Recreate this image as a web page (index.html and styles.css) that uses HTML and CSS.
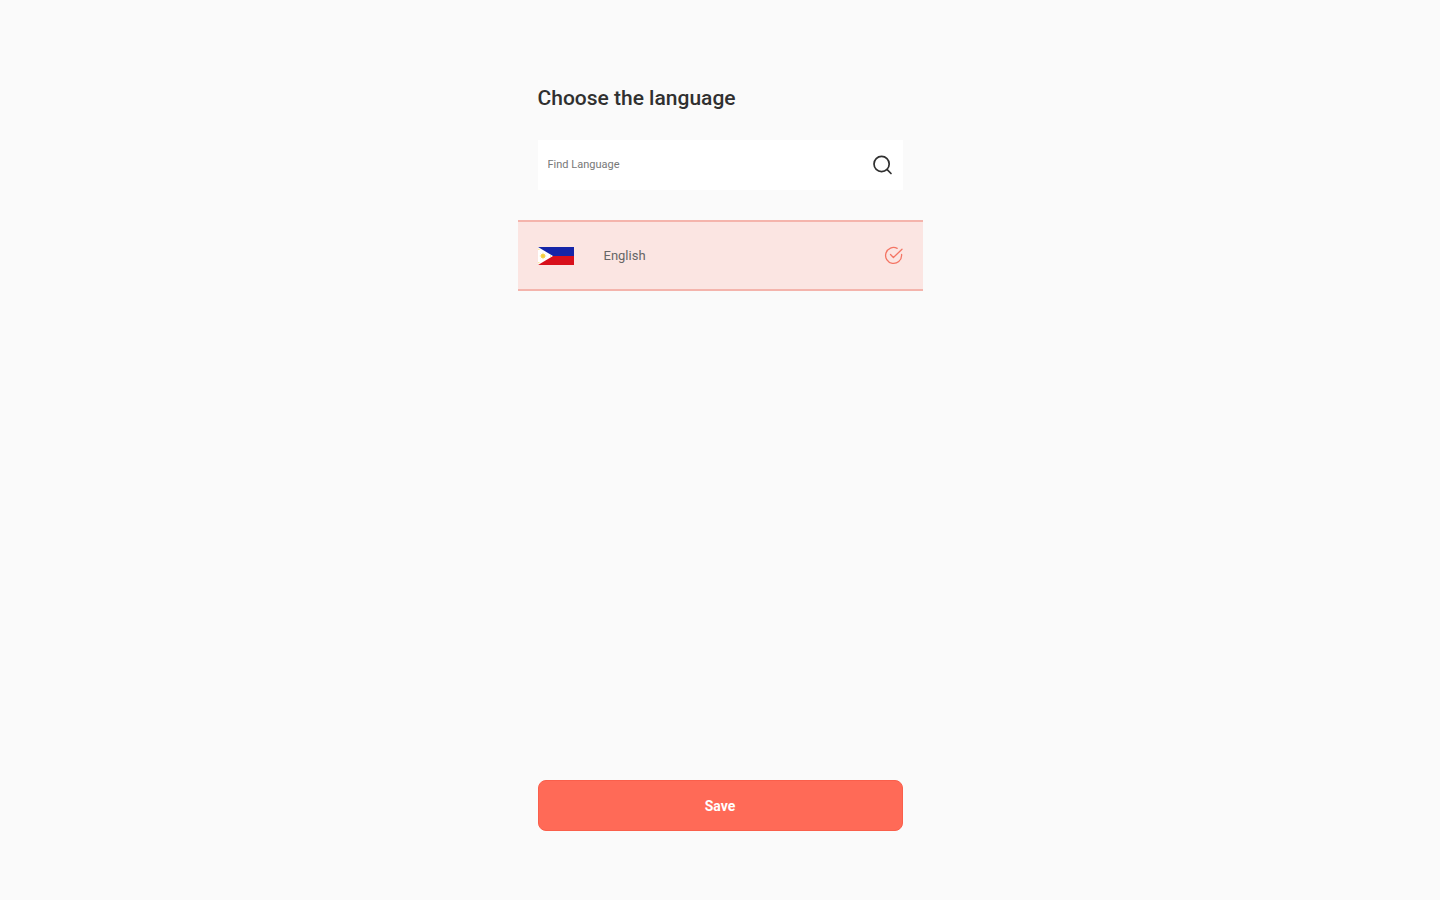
FILE: index.html
```html
<!DOCTYPE html>
<html lang="en">
<head>
  <meta charset="utf-8">
  <meta name="viewport" content="width=device-width, initial-scale=1">
  <title>Choose the language</title>
  <link rel="stylesheet" href="styles.css">
</head>
<body>
  <main class="page">
    <form class="picker">
      <h1 class="title">Choose the language</h1>
      <div class="search">
        <input class="search-input" type="search" placeholder="Find Language" aria-label="Find Language">
        <button class="search-button" type="button" aria-label="Search">
          <svg width="20" height="20" viewBox="0 0 20 20" fill="none" stroke="#303030" stroke-width="1.7" stroke-linecap="round">
            <circle cx="8.6" cy="9" r="7.6"/>
            <path d="M14.2 14.6L18 18.5"/>
          </svg>
        </button>
      </div>
      <label class="option">
        <input class="option-radio" type="radio" name="language" value="en" checked>
        <svg class="flag" width="36" height="18" viewBox="0 0 36 18" aria-hidden="true">
          <path fill="#1525a8" d="M0 0H36V9H0z"/>
          <path fill="#d8101c" d="M0 9H36V18H0z"/>
          <path fill="#fff" d="M0 0L15 9L0 18z"/>
          <circle cx="5" cy="9" r="2" fill="#f5cf3c"/>
          <path stroke="#f5cf3c" stroke-width=".7" d="M5 5.8V12.2M1.8 9H8.2M2.8 6.8L7.2 11.2M7.2 6.8L2.8 11.2"/>
          <path fill="#f5cf3c" d="M.4 1.7h1v1h-1zM.4 15.3h1v1h-1zM12 8.5h1v1h-1z"/>
        </svg>
        <span class="option-name">English</span>
        <svg class="tick" width="20" height="20" viewBox="0 0 20 20" fill="none" stroke="#f47564" stroke-width="1.3" stroke-linecap="round" stroke-linejoin="round" aria-hidden="true">
          <path d="M18.6 8.4V9.5A8 8 0 1 1 14.2 2.3"/>
          <path d="M7.5 8.5L10.4 11.5L19 3.3"/>
        </svg>
      </label>
      <button class="save" type="submit">Save</button>
    </form>
  </main>
</body>
</html>
```
FILE: styles.css
```css
* {
  box-sizing: border-box;
}

body {
  margin: 0;
  background: #fafafa;
  color: #303030;
  font-family: Roboto, Inter, sans-serif;
}

.page {
  display: flex;
  justify-content: center;
  min-height: 100vh;
  padding: 84px 0 69px;
}

.picker {
  display: flex;
  flex-direction: column;
  width: 100%;
  max-width: 405px;
}

.title {
  margin: 0 20px 28px;
  font-size: 21px;
  font-weight: 500;
  line-height: 28px;
}

.search {
  display: flex;
  align-items: center;
  height: 50px;
  margin: 0 20px 30px;
  padding: 0 10px;
  background: #fff;
}

.search-input {
  flex: 1;
  min-width: 0;
  padding: 0;
  border: 0;
  outline: 0;
  background: transparent;
  color: inherit;
  font: 400 11px/16px Roboto, Inter, sans-serif;
}

.search-input::placeholder {
  color: #777;
  opacity: 1;
}

.search-button {
  display: flex;
  padding: 0;
  border: 0;
  background: none;
  cursor: pointer;
}

.option {
  display: flex;
  align-items: center;
  height: 71px;
  padding: 0 20px;
  border: solid #f4b4ac;
  border-width: 2px 0;
  background: #fbe5e2;
  cursor: pointer;
}

.option-radio {
  position: absolute;
  opacity: 0;
}

.option-name {
  flex: 1;
  margin-left: 30px;
  color: #666;
  font-size: 13px;
  line-height: 16px;
}

.save {
  height: 51px;
  margin: auto 20px 0;
  padding: 0;
  border: 1px solid #fa5f4b;
  border-radius: 8px;
  background: #ff6a57;
  color: #fff;
  font: 700 14px/20px Roboto, Inter, sans-serif;
  cursor: pointer;
}
```
